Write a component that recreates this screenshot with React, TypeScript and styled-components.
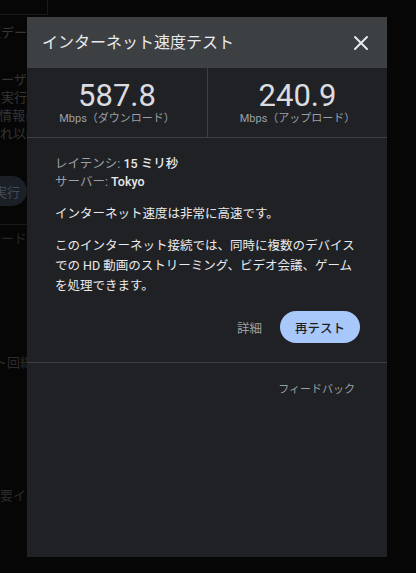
import React from 'react';
import styled, { createGlobalStyle } from 'styled-components';
import { X } from 'lucide-react';

const GlobalStyle = createGlobalStyle`
  html, body {
    margin: 0;
    padding: 0;
    background: #060606;
  }
  body {
    font-family: Roboto, "Noto Sans CJK JP", sans-serif;
    overflow: hidden;
  }
`;

const RESULTS = [
  { id: 'down', value: '587.8', label: 'Mbps（ダウンロード）' },
  { id: 'up', value: '240.9', label: 'Mbps（アップロード）' },
];

// dimmed settings page that sits under the dialog
const Page = styled.div`
  position: relative;
  width: 416px;
  height: 573px;
  overflow: hidden;
  background: #060606;
`;

const TopBox = styled.div`
  width: 47px;
  height: 14px;
  border-right: 1px solid #1a1a1a;
  border-bottom: 1px solid #1a1a1a;
`;

// only the strip left of the dialog is visible
const BgColumn = styled.div`
  width: 27px;
  overflow: hidden;
`;

const BgLine = styled.div<{ $top: number; $shift: number; $color?: string }>`
  margin-top: ${(p) => p.$top}px;
  margin-left: ${(p) => p.$shift}px;
  font-size: 13px;
  line-height: 18px;
  color: ${(p) => p.$color || '#353535'};
  white-space: nowrap;
`;

const BgRule = styled.div<{ $top: number }>`
  margin-top: ${(p) => p.$top}px;
  height: 1px;
  background: #181818;
`;

const BgPill = styled.div`
  margin: 33px 0 0 -50px;
  width: 77px;
  height: 30px;
  border-radius: 15px;
  background: #1b1f26;
  color: #464c55;
  font-size: 13px;
  display: flex;
  align-items: center;
  justify-content: flex-end;
  padding-right: 7px;
  box-sizing: border-box;
`;

const Dialog = styled.div`
  position: absolute;
  top: 17px;
  left: 27px;
  width: 360px;
  height: 540px;
  background: #202124;
  display: flex;
  flex-direction: column;
`;

const Header = styled.div`
  height: 51px;
  flex-shrink: 0;
  background: #3c4043;
  display: flex;
  align-items: center;
  justify-content: space-between;
  padding: 0 14px 0 15px;
  box-sizing: border-box;
`;

const Title = styled.h2`
  margin: 0;
  font-size: 16px;
  font-weight: 400;
  line-height: 20px;
  color: #e8eaed;
`;

const CloseButton = styled.button`
  border: 0;
  padding: 0;
  background: none;
  color: #e8eaed;
  width: 24px;
  height: 24px;
  display: flex;
  cursor: pointer;
`;

const Results = styled.div`
  display: grid;
  grid-template-columns: 1fr 1fr;
  border-bottom: 1px solid #3c4043;
`;

const Result = styled.div`
  padding: 12px 0 11px;
  text-align: center;

  & + & {
    border-left: 1px solid #3c4043;
  }
`;

const Speed = styled.div`
  font-size: 31px;
  line-height: 32px;
  color: #dadce0;
`;

const Unit = styled.div`
  font-size: 11px;
  line-height: 14px;
  color: #9aa0a6;
`;

const Body = styled.div`
  padding: 17px 27px 19px 28px;
  font-size: 12.5px;
  color: #e8eaed;
  border-bottom: 1px solid #3c4043;
`;

const InfoRow = styled.div`
  line-height: 18px;
  color: #9aa0a6;

  b {
    font-weight: 500;
    color: #e8eaed;
  }
`;

const Summary = styled.p`
  margin: 14px 0 0;
  line-height: 18px;
`;

const Detail = styled.p`
  margin: 13px 0 0;
  line-height: 20px;
  white-space: nowrap;
`;

const Actions = styled.div`
  margin-top: 15px;
  display: flex;
  justify-content: flex-end;
  align-items: center;
`;

const TextButton = styled.button`
  border: 0;
  background: none;
  font: inherit;
  font-size: 12.5px;
  color: #9aa0a6;
  padding: 0 10px;
  margin-right: 8px;
  height: 32px;
  cursor: pointer;
`;

const PillButton = styled.button`
  border: 0;
  font: inherit;
  font-size: 12.5px;
  font-weight: 500;
  color: #1f1f1f;
  background: #a8c7fa;
  height: 32px;
  width: 80px;
  border-radius: 16px;
  cursor: pointer;
`;

const Footer = styled.div`
  display: flex;
  justify-content: flex-end;
  padding: 20px 32px 0 0;
`;

const FeedbackLink = styled.a`
  font-size: 11px;
  line-height: 14px;
  color: #9aa0a6;
  text-decoration: none;
  cursor: pointer;
`;

const App: React.FC = () => {
  return (
    <>
      <GlobalStyle />
      <Page>
        <TopBox />
        <BgColumn>
          <BgLine $top={9} $shift={-25}>閲覧データの削除</BgLine>
          <BgLine $top={29} $shift={-12}>ユーザー設定</BgLine>
          <BgLine $top={0} $shift={-12}>を実行します</BgLine>
          <BgLine $top={0} $shift={-1}>情報について</BgLine>
          <BgLine $top={0} $shift={-13}>それ以外</BgLine>
          <BgPill>実行</BgPill>
          <BgRule $top={18} />
          <BgLine $top={5} $shift={-25} $color="#262626">フィードバック</BgLine>
          <BgLine $top={106} $shift={-84} $color="#2c2c2c">インターネット回線</BgLine>
          <BgLine $top={115} $shift={-13} $color="#2c2c2c">重要イベント</BgLine>
        </BgColumn>

        <Dialog role="dialog" aria-label="インターネット速度テスト">
          <Header>
            <Title>インターネット速度テスト</Title>
            <CloseButton aria-label="閉じる">
              <X size={24} strokeWidth={2} />
            </CloseButton>
          </Header>

          <Results>
            {RESULTS.map((r) => (
              <Result key={r.id}>
                <Speed>{r.value}</Speed>
                <Unit>{r.label}</Unit>
              </Result>
            ))}
          </Results>

          <Body>
            <InfoRow>
              レイテンシ: <b>15 ミリ秒</b>
            </InfoRow>
            <InfoRow>
              サーバー: <b>Tokyo</b>
            </InfoRow>
            <Summary>インターネット速度は非常に高速です。</Summary>
            <Detail>
              このインターネット接続では、同時に複数のデバイス
              <br />
              での HD 動画のストリーミング、ビデオ会議、ゲーム
              <br />
              を処理できます。
            </Detail>
            <Actions>
              <TextButton>詳細</TextButton>
              <PillButton>再テスト</PillButton>
            </Actions>
          </Body>

          <Footer>
            <FeedbackLink>フィードバック</FeedbackLink>
          </Footer>
        </Dialog>
      </Page>
    </>
  );
};

export default App;
